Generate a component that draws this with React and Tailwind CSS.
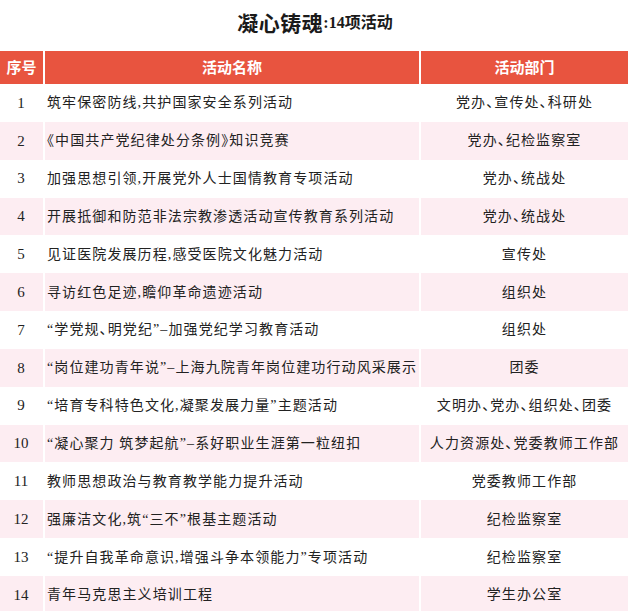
const rows = [
  ["1", "筑牢保密防线,共护国家安全系列活动", "党办、宣传处、科研处"],
  ["2", "《中国共产党纪律处分条例》知识竞赛", "党办、纪检监察室"],
  ["3", "加强思想引领,开展党外人士国情教育专项活动", "党办、统战处"],
  ["4", "开展抵御和防范非法宗教渗透活动宣传教育系列活动", "党办、统战处"],
  ["5", "见证医院发展历程,感受医院文化魅力活动", "宣传处"],
  ["6", "寻访红色足迹,瞻仰革命遗迹活动", "组织处"],
  ["7", "“学党规、明党纪”–加强党纪学习教育活动", "组织处"],
  ["8", "“岗位建功青年说”–上海九院青年岗位建功行动风采展示", "团委"],
  ["9", "“培育专科特色文化,凝聚发展力量”主题活动", "文明办、党办、组织处、团委"],
  ["10", "“凝心聚力 筑梦起航”–系好职业生涯第一粒纽扣", "人力资源处、党委教师工作部"],
  ["11", "教师思想政治与教育教学能力提升活动", "党委教师工作部"],
  ["12", "强廉洁文化,筑“三不”根基主题活动", "纪检监察室"],
  ["13", "“提升自我革命意识,增强斗争本领能力”专项活动", "纪检监察室"],
  ["14", "青年马克思主义培训工程", "学生办公室"],
];

export default function App() {
  return (
    <div className="w-[628px] h-[611px] overflow-hidden bg-white font-['Liberation_Serif','Noto_Sans_CJK_SC',serif] text-[#222]">
      {/* Title */}
      <div className="h-[51px] flex items-center justify-center pb-[6px] pl-[2px] text-[#1a1a1a]">
        <span className="text-[21px] font-bold tracking-[0.5px] font-['Noto_Sans_CJK_SC',sans-serif]">凝心铸魂</span>
        <span className="text-[16px] font-bold">:14项活动</span>
      </div>

      {/* Header */}
      <div className="grid grid-cols-[43px_374px_1fr] gap-x-[2px] h-[33px] bg-white text-white font-bold text-[15px] font-['Noto_Sans_CJK_SC',sans-serif]">
        <div className="bg-[#e8543f] flex items-center justify-center">序号</div>
        <div className="bg-[#e8543f] flex items-center justify-center">活动名称</div>
        <div className="bg-[#e8543f] flex items-center justify-center">活动部门</div>
      </div>

      {/* Rows */}
      {rows.map((r, i) => {
        const cell = i % 2 === 1 ? "bg-[#fdedf2]" : "bg-white";
        return (
          <div
            key={i}
            className="grid grid-cols-[43px_374px_1fr] gap-x-[2px] h-[37.85px] bg-white text-[14px] [font-feature-settings:'halt']"
          >
            <div className={`${cell} flex items-center justify-center text-[15px] pr-[1px]`}>{r[0]}</div>
            <div className={`${cell} flex items-center pl-[2px] tracking-[1.1px] whitespace-nowrap`}>{r[1]}</div>
            <div className={`${cell} flex items-center justify-center tracking-[1.1px] whitespace-nowrap`}>{r[2]}</div>
          </div>
        );
      })}
    </div>
  );
}
